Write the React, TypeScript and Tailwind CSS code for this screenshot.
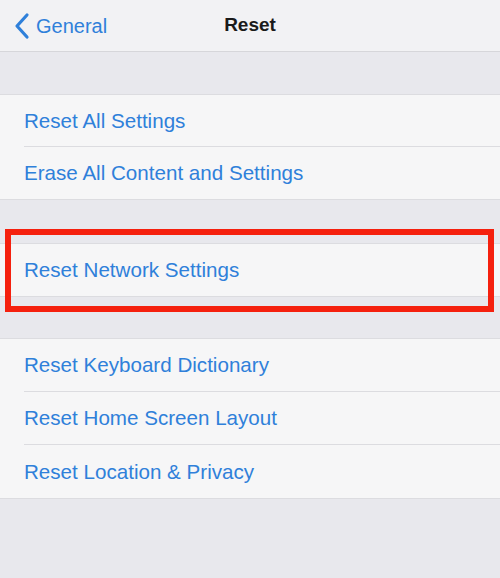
import React from "react";

const font = { fontFamily: '"Liberation Sans", Arial, sans-serif' };

function Row({ label, last, tall }: { label: string; last?: boolean; tall?: boolean }) {
  return (
    <div className="pl-[24px] bg-[#f6f6f7]">
      <div
        className={`${tall ? "h-[53px]" : "h-[52px]"} flex items-center pt-[1px] text-[20.6px] text-[#2f80da] ${
          last ? "" : "border-b border-[#dcdce0]"
        }`}
      >
        {label}
      </div>
    </div>
  );
}

function Group({ items, tall }: { items: string[]; tall?: boolean }) {
  return (
    <div className="border-y border-[#dcdce0] bg-[#f6f6f7]">
      {items.map((t, i) => (
        <Row key={t} label={t} tall={tall} last={i === items.length - 1} />
      ))}
    </div>
  );
}

export default function App() {
  return (
    <div className="relative w-[500px] h-[578px] bg-[#e8e8ed] overflow-hidden" style={font}>
      <div className="h-[52px] bg-[#f2f2f4] border-b border-[#d6d6da] flex items-center relative">
        <div className="flex items-center pl-[13px] text-[#2f80da] text-[20px]">
          <svg width="18" height="28" viewBox="0 0 18 28" className="mr-[5px]">
            <path d="M14 3 L4 14 L14 25" fill="none" stroke="#2f80da" strokeWidth="3.2" strokeLinecap="round" strokeLinejoin="round" />
          </svg>
          <span>General</span>
        </div>
        <div className="absolute left-0 right-0 text-center text-[19px] font-bold text-[#1a1a1a] pointer-events-none">
          Reset
        </div>
      </div>
      <div className="h-[42px]" />
      <Group items={["Reset All Settings", "Erase All Content and Settings"]} />
      <div className="h-[43px]" />
      <Group items={["Reset Network Settings"]} />
      <div className="h-[41px]" />
      <Group tall items={["Reset Keyboard Dictionary", "Reset Home Screen Layout", "Reset Location & Privacy"]} />
      <div className="absolute left-[5px] top-[229px] w-[489px] h-[83px] border-[6px] border-[#f5200e]" />
    </div>
  );
}
